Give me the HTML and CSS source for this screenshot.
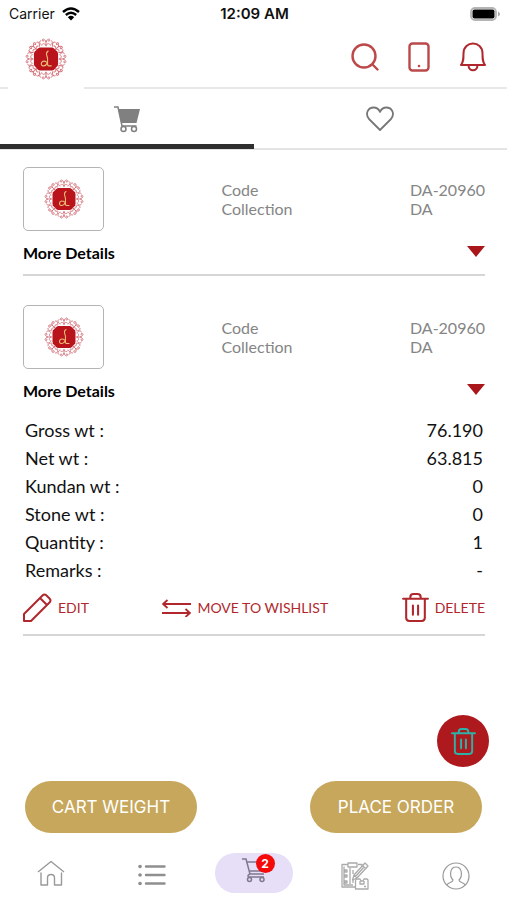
FILE: index.html
```html
<!DOCTYPE html>
<html lang="en">
<head>
    <meta charset="UTF-8">
    <meta name="viewport" content="width=device-width, initial-scale=1">
    <title>Cart</title>
    <link rel="stylesheet" href="styles.css">
</head>
<body>
    <!-- Shared icons -->
    <svg class="sprite" aria-hidden="true">
        <symbol id="ornament" viewBox="-20 -20 40 40">
            <g fill="none" stroke="#d4707a" stroke-width="0.9" stroke-linecap="round">
                <path d="M0-12.500V-17M0-16.500C-1-19-3.500-20-3.500-17.800C-3.500-16.500-2-16.500-2-17.500M0-16.500C1-19 3.500-20 3.500-17.800C3.500-16.500 2-16.500 2-17.500M0-13C-1-15-3-15-3.500-14M0-13C1-15 3-15 3.500-14"/>
                <path d="M-4-13C-6-14-7-17-5-17.500M4-13C6-14 7-17 5-17.500"/>
            </g>
        </symbol>
        <symbol id="logo" viewBox="0 0 40 40">
            <use href="#ornament" width="40" height="40"/>
            <use href="#ornament" width="40" height="40" transform="rotate(45 20 20)"/>
            <use href="#ornament" width="40" height="40" transform="rotate(90 20 20)"/>
            <use href="#ornament" width="40" height="40" transform="rotate(135 20 20)"/>
            <use href="#ornament" width="40" height="40" transform="rotate(180 20 20)"/>
            <use href="#ornament" width="40" height="40" transform="rotate(225 20 20)"/>
            <use href="#ornament" width="40" height="40" transform="rotate(270 20 20)"/>
            <use href="#ornament" width="40" height="40" transform="rotate(315 20 20)"/>
            <path d="M14 9H26Q28 9.500 29 11.500Q31.500 12.500 31.500 15V25Q31.500 27.500 29 28.500Q28 30.500 26 31H14Q12 30.500 11 28.500Q8.500 27.500 8.500 25V15Q8.500 12.500 11 11.500Q12 9.500 14 9Z" fill="#b9141c"/>
            <path d="M22 12.500C18.500 14.500 21.500 17 21.500 20C21.500 23 21 26.500 22.500 26.500H25M20.500 23C18 21 15.500 22.500 15.500 24.500C15.500 27.500 20 27 21 24" fill="none" stroke="#ecbb74" stroke-width="1.100" stroke-linecap="round"/>
        </symbol>
        <symbol id="trash" viewBox="0 0 26 28">
            <g fill="none" stroke="currentColor" stroke-width="2" stroke-linecap="round" stroke-linejoin="round">
                <path d="M1 5.500H25M8 5V4Q8 1 11 1H15Q18 1 18 4V5M4 6V24Q4 27 7 27H19Q22 27 22 24V6M10.500 12V21M15.500 12V21"/>
            </g>
        </symbol>
    </svg>

    <div class="status-bar">
        <div class="carrier">
            <span>Carrier</span>
            <svg width="18" height="14" viewBox="0 0 18 14" fill="none" stroke="#000" stroke-width="2.400">
                <path d="M1 5Q9-2.200 17 5M3.800 8Q9 3.600 14.200 8"/>
                <path d="M9 13.500L5.800 10.200Q9 7.500 12.200 10.200Z" fill="#000" stroke="none"/>
            </svg>
        </div>
        <div class="clock">12:09 AM</div>
        <div class="battery">
            <svg width="30" height="14" viewBox="0 0 30 14">
                <rect x="1" y="1" width="25" height="12" rx="4" fill="#fff" stroke="#b4b4b4" stroke-width="1.800"/>
                <rect x="2.500" y="2.500" width="22" height="9" rx="2" fill="#000"/>
                <path d="M28 4.500Q30 5.500 30 7T28 9.500Z" fill="#aaa"/>
            </svg>
        </div>
    </div>

    <header class="header">
        <a class="brand" href="#" aria-label="Home">
            <svg width="42" height="42"><use href="#logo"/></svg>
        </a>
        <div class="header-actions">
            <button class="icon-button" aria-label="Search">
                <svg width="28" height="30" viewBox="0 0 28 30" fill="none" stroke="#bb494b" stroke-width="2.400" stroke-linecap="round">
                    <circle cx="13" cy="14" r="11.500"/><path d="M21.500 22.500L26.500 27.500"/>
                </svg>
            </button>
            <button class="icon-button" aria-label="Phone">
                <svg width="28" height="30" viewBox="0 0 28 30" fill="none" stroke="#bb494b" stroke-width="2.400">
                    <rect x="4.500" y="1.500" width="19" height="27" rx="3"/><circle cx="14" cy="24" r="1.300" fill="#bb494b" stroke="none"/>
                </svg>
            </button>
            <button class="icon-button" aria-label="Notifications">
                <svg width="28" height="30" viewBox="0 0 28 30" fill="none" stroke="#b0282d" stroke-width="2" stroke-linejoin="round">
                    <path d="M2 23C4.500 20 4.500 17 4.500 11.500C4.500-1.700 23.500-1.700 23.500 11.500C23.500 17 23.500 20 26 23ZM9.500 23C9.500 30 18.500 30 18.500 23"/>
                </svg>
            </button>
        </div>
    </header>

    <nav class="tabs">
        <a class="tab active" href="#" aria-label="Cart">
            <svg width="28" height="28" viewBox="0 0 28 28" fill="none" stroke="#808080" stroke-width="1.500">
                <path d="M5 4H27L23.500 18H8.500Z" fill="#808080" stroke="none"/>
                <path d="M1 2H5L9 21H23.500"/><circle cx="10.500" cy="24" r="2.500"/><circle cx="21" cy="24" r="2.500"/>
            </svg>
        </a>
        <a class="tab" href="#" aria-label="Wishlist">
            <svg width="28" height="28" viewBox="0 0 28 28" fill="none" stroke="#777" stroke-width="1.800" stroke-linejoin="round">
                <path d="M14 25L3 14C-1.500 8.500 2.500 2.500 7.500 2.500C11 2.500 13 4.500 14 7C15 4.500 17 2.500 20.500 2.500C25.500 2.500 29.500 8.500 25 14Z"/>
            </svg>
        </a>
    </nav>

    <main class="cart">
        <article class="item">
            <div class="item-top">
                <div class="thumb"><svg width="40" height="40"><use href="#logo"/></svg></div>
                <div class="meta">Code<br>Collection</div>
                <div class="meta">DA-20960<br>DA</div>
            </div>
            <button class="more" aria-expanded="false">More Details <span class="arrow"></span></button>
        </article>

        <article class="item">
            <div class="item-top">
                <div class="thumb"><svg width="40" height="40"><use href="#logo"/></svg></div>
                <div class="meta">Code<br>Collection</div>
                <div class="meta">DA-20960<br>DA</div>
            </div>
            <button class="more" aria-expanded="true">More Details <span class="arrow"></span></button>
            <dl class="details">
                <div class="row"><dt>Gross wt :</dt><dd>76.190</dd></div>
                <div class="row"><dt>Net wt :</dt><dd>63.815</dd></div>
                <div class="row"><dt>Kundan wt :</dt><dd>0</dd></div>
                <div class="row"><dt>Stone wt :</dt><dd>0</dd></div>
                <div class="row"><dt>Quantity :</dt><dd>1</dd></div>
                <div class="row"><dt>Remarks :</dt><dd>-</dd></div>
            </dl>
            <div class="item-actions">
                <button class="action">
                    <svg width="29" height="29" viewBox="0 0 29 29" fill="none" stroke="currentColor" stroke-width="2" stroke-linejoin="round">
                        <path d="M1 28V21L19.500 2.500Q21.500 .5 23.500 2.500L26.500 5.500Q28.500 7.500 26.500 9.500L8 28ZM17 5L24 12"/>
                    </svg>
                    EDIT
                </button>
                <button class="action">
                    <svg width="29" height="18" viewBox="0 0 29 18" fill="none" stroke="currentColor" stroke-width="1.800">
                        <path d="M29 5H1M5.500 1L1 5L5.500 9M0 14H28M23.500 10L28 14L23.500 18"/>
                    </svg>
                    MOVE TO WISHLIST
                </button>
                <button class="action">
                    <svg width="27" height="29"><use href="#trash"/></svg>
                    DELETE
                </button>
            </div>
        </article>
    </main>

    <button class="clear-cart" aria-label="Clear cart">
        <svg width="25" height="27"><use href="#trash"/></svg>
    </button>

    <div class="checkout">
        <button class="pill">CART WEIGHT</button>
        <button class="pill">PLACE ORDER</button>
    </div>

    <nav class="bottom-nav">
        <a class="nav-item" href="#" aria-label="Home">
            <svg width="28" height="26" viewBox="0 0 28 26" fill="none" stroke="#999" stroke-width="1.400" stroke-linejoin="round">
                <path d="M1 12L14 1.500L27 12M4 12.500V25H10.500V18Q10.500 14.500 14 14.500T17.500 18V25H24.500V12.500"/>
            </svg>
        </a>
        <a class="nav-item" href="#" aria-label="Categories">
            <svg width="28" height="22" viewBox="0 0 28 22" fill="none" stroke="#8f8f8f" stroke-width="2.400" stroke-linecap="round">
                <path d="M8 2.500H26.500M8 11H26.500M8 19.500H26.500"/>
                <path d="M2 2.500H2.100M2 11H2.100M2 19.500H2.100" stroke-width="3.600"/>
            </svg>
        </a>
        <a class="nav-item" href="#" aria-label="Cart, 2 items">
            <span class="nav-active">
                <svg width="26" height="26" viewBox="0 0 26 26" fill="none" stroke="#80788c" stroke-width="1.500">
                    <path d="M1 2H5L9 17H23M6 5H24L21.500 14H8.500M9 17Q6 18 7.500 20H23"/>
                    <circle cx="8.500" cy="22.500" r="2"/><circle cx="21" cy="22.500" r="2"/>
                </svg>
                <span class="badge">2</span>
            </span>
        </a>
        <a class="nav-item low" href="#" aria-label="Orders">
            <svg width="28" height="28" viewBox="0 0 28 28" fill="none" stroke="#aaa" stroke-width="1.300" stroke-linejoin="round">
                <path d="M7 2.500H1V25H14M17 2.500H21V5M7 1H16V5H7ZM4 8H6V10H4ZM4 13H6V15H4ZM4 19H6V21H4ZM9 6V22M12 8V12M12 17V21M3 4.500V23H12"/>
                <path d="M24 1L27 4L16 16L11.500 18L13 13ZM21.500 3.500L24.500 6.500M13 13L16 16M14.500 14.500L23 5"/>
                <path d="M14.500 18L16 17H19L20 19H22L23 17H26L27 18V27H14.500ZM19 19V22H23V19M23 24.500H25"/>
            </svg>
        </a>
        <a class="nav-item low" href="#" aria-label="Profile">
            <svg width="28" height="28" viewBox="0 0 28 28" fill="none" stroke="#999" stroke-width="1.200" stroke-linejoin="round">
                <circle cx="14" cy="14" r="13"/>
                <path d="M5 23C6 20 11 21 11 18C7 14 8 5 14 5S21 14 17 18C17 21 22 20 23 23"/>
            </svg>
        </a>
    </nav>
</body>
</html>
```

FILE: styles.css
```css
* {
    box-sizing: border-box;
}
body {
    margin: 0;
    min-height: 100vh;
    display: flex;
    flex-direction: column;
    background-color: #fff;
    color: #111;
    font-family: Lato, "Liberation Sans", sans-serif;
    font-size: 16px;
}
button {
    padding: 0;
    border: none;
    background: none;
    color: inherit;
    font: inherit;
    cursor: pointer;
}
svg {
    display: block;
    flex: none;
}
.sprite {
    position: absolute;
    width: 0;
    height: 0;
}

/* Status bar */
.status-bar {
    display: grid;
    grid-template-columns: 1fr auto 1fr;
    align-items: center;
    height: 27px;
    padding: 0 7px 0 9px;
    font-family: Inter, "Liberation Sans", sans-serif;
    font-size: 14px;
}
.carrier {
    display: flex;
    align-items: center;
    gap: 7px;
}
.clock {
    font-size: 15px;
    font-weight: 600;
}
.battery {
    justify-self: end;
}

/* Header */
.header {
    display: flex;
    justify-content: space-between;
    height: 62px;
    padding: 0 20px 0 8px;
    border-bottom: 2px solid #e8e8e8;
}
.brand {
    display: flex;
    align-items: center;
    justify-content: center;
    width: 76px;
    height: 62px;
    padding-top: 2px;
    background-color: #fff;
}
.header-actions {
    display: flex;
    align-items: center;
    gap: 26px;
}

/* Tabs */
.tabs {
    display: flex;
    border-bottom: 2px solid #e4e4e4;
}
.tab {
    flex: 1;
    display: flex;
    align-items: center;
    justify-content: center;
    height: 60px;
    margin-bottom: -1px;
    border-bottom: 5px solid transparent;
    padding-top: 4px;
}
.tab.active {
    border-bottom-color: #2e2e2e;
}

/* Cart items */
.cart {
    flex: 1;
    padding: 0 22px 0 23px;
}
.item {
    padding-top: 17px;
    border-bottom: 2px solid #d6d6d6;
}
.item + .item {
    padding-top: 29px;
}
.item-top {
    display: flex;
    justify-content: space-between;
    align-items: center;
}
.thumb {
    display: flex;
    align-items: center;
    justify-content: center;
    width: 81px;
    height: 64px;
    border: 1px solid #b4b4b4;
    border-radius: 5px;
}
.meta {
    color: #858585;
    line-height: 19px;
}
.more {
    display: flex;
    align-items: center;
    justify-content: space-between;
    width: 100%;
    height: 43px;
    color: #000;
    font-weight: bold;
}
.arrow {
    border: 9px solid transparent;
    border-top: 11px solid #aa171b;
    border-bottom: 0;
    margin-bottom: 3px;
}
.details {
    margin: 4px 0 0;
    padding: 0 2px;
    font-size: 18px;
    line-height: 28px;
}
.row {
    display: flex;
    justify-content: space-between;
}
.row dd {
    margin: 0;
}
.item-actions {
    display: flex;
    justify-content: space-between;
    padding: 9px 0 12px;
}
.action {
    display: flex;
    align-items: center;
    gap: 6px;
    color: #b0282d;
    font-size: 14px;
}

/* Floating clear button */
.clear-cart {
    display: flex;
    align-items: center;
    justify-content: center;
    align-self: flex-end;
    width: 52px;
    height: 52px;
    margin: 0 18px 14px 0;
    border-radius: 50%;
    background-color: #ae191e;
    color: #2bb3a8;
}

/* Checkout buttons */
.checkout {
    display: flex;
    justify-content: space-between;
    padding: 0 25px;
}
.pill {
    width: 172px;
    height: 52px;
    border-radius: 26px;
    background-color: #c6a75b;
    color: #fff;
    font-family: Inter, "Liberation Sans", sans-serif;
    font-size: 17px;
}

/* Bottom navigation */
.bottom-nav {
    display: flex;
    height: 67px;
    padding-bottom: 7px;
}
.nav-item {
    flex: 1;
    display: flex;
    align-items: flex-end;
    justify-content: center;
    padding-bottom: 7px;
}
.nav-item.low {
    padding-bottom: 3px;
}
.nav-item:nth-child(3) {
    padding-bottom: 0;
}
.nav-active {
    position: relative;
    display: flex;
    justify-content: center;
    width: 78px;
    height: 40px;
    padding-top: 4px;
    border-radius: 20px;
    background-color: #e7def8;
}
.badge {
    position: absolute;
    top: 1px;
    left: 41px;
    width: 19px;
    height: 19px;
    border-radius: 50%;
    background-color: #f50a0a;
    color: #fff;
    font-family: Inter, "Liberation Sans", sans-serif;
    font-size: 12px;
    font-weight: bold;
    line-height: 19px;
    text-align: center;
}
```
